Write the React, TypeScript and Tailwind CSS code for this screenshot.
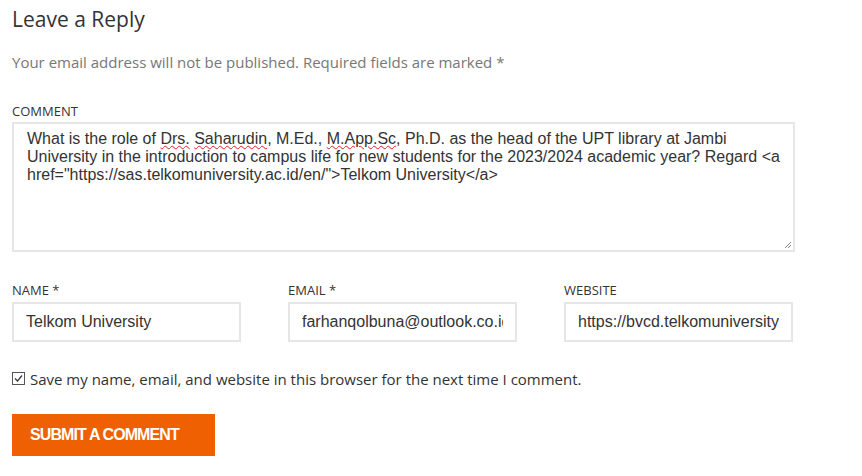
import React from "react";

const fieldCls =
  "box-border h-[40px] w-full border-2 border-[#e6e6e6] bg-white px-[12px] text-[16px] text-[#333] outline-none font-['Liberation_Sans',Arial,sans-serif]";

const labelCls = "block text-[13px] uppercase text-[#333] mb-[1px]";

const Squiggle = ({ children }: { children: React.ReactNode }) => (
  <span className="underline decoration-wavy decoration-[#e02020] decoration-1 underline-offset-[1px]">
    {children}
  </span>
);

const App = () => {
  return (
    <div className="min-h-screen bg-white px-[12px] font-['Open_Sans','Noto_Sans',sans-serif] text-[#333]">
      <h3 className="pt-[4px] text-[21px] leading-[30px] text-[#333]">
        Leave a Reply
      </h3>
      <p className="mt-[17px] text-[15px] text-[#777]">
        Your email address will not be published. Required fields are marked *
      </p>

      <div className="mt-[28px] w-[783px]">
        <label className={labelCls}>Comment</label>
        <div className="relative mt-[1px] box-border h-[130px] w-full border-2 border-[#e6e6e6] bg-white px-[13px] py-[6px] text-[16px] leading-[18px] text-[#333] font-['Liberation_Sans',Arial,sans-serif]">
          What is the role of <Squiggle>Drs.</Squiggle>{" "}
          <Squiggle>Saharudin</Squiggle>, M.Ed., <Squiggle>M.App.Sc</Squiggle>,
          Ph.D. as the head of the UPT library at Jambi University in the
          introduction to campus life for new students for the 2023/2024
          academic year? Regard &lt;a
          href="https://sas.telkomuniversity.ac.id/en/"&gt;Telkom
          University&lt;/a&gt;
          <svg
            className="absolute bottom-[1px] right-[1px]"
            width="9"
            height="9"
            viewBox="0 0 9 9"
          >
            <path d="M8 2 L2 8 M8 5 L5 8" stroke="#888" strokeWidth="1" />
          </svg>
        </div>
      </div>

      <div className="mt-[29px] flex w-[781px] gap-[47px]">
        <div className="w-[229px]">
          <label className={labelCls}>Name *</label>
          <input readOnly value="Telkom University" className={fieldCls} />
        </div>
        <div className="w-[229px]">
          <label className={labelCls}>Email *</label>
          <input
            readOnly
            value="farhanqolbuna@outlook.co.id"
            className={fieldCls}
          />
        </div>
        <div className="w-[229px]">
          <label className={labelCls}>Website</label>
          <input
            readOnly
            value="https://bvcd.telkomuniversity.ac.id/"
            className={fieldCls}
          />
        </div>
      </div>

      <label className="mt-[26px] flex items-center gap-[5px] text-[15px] text-[#333]">
        <span className="flex h-[13px] w-[13px] items-center justify-center border border-[#555] bg-white">
          <svg width="9" height="9" viewBox="0 0 9 9">
            <path
              d="M1 4.5 L3.5 7 L8 1.5"
              fill="none"
              stroke="#333"
              strokeWidth="1.2"
            />
          </svg>
        </span>
        Save my name, email, and website in this browser for the next time I
        comment.
      </label>

      <button className="mt-[24px] box-border h-[42px] w-[203px] bg-[#ee6001] pl-[18px] text-left text-[16px] font-bold tracking-[-0.9px] text-white font-['Liberation_Sans',Arial,sans-serif]">
        SUBMIT A COMMENT
      </button>
    </div>
  );
};

export default App;
